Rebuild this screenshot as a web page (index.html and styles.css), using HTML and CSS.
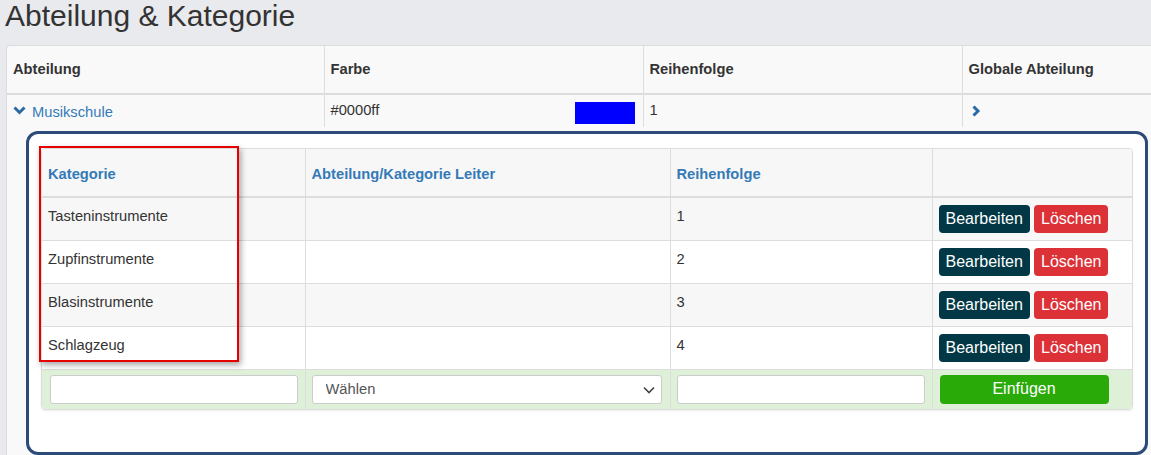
FILE: index.html
```html
<!DOCTYPE html>
<html lang="de">
<head>
  <meta charset="UTF-8">
  <meta name="viewport" content="width=device-width, initial-scale=1.0">
  <title>Abteilung &amp; Kategorie</title>
  <link rel="stylesheet" href="styles.css">
</head>
<body>

  <h1>Abteilung &amp; Kategorie</h1>

  <div class="dept-wrap">
    <table class="dept-table">
      <colgroup>
        <col style="width: 317px">
        <col style="width: 319px">
        <col style="width: 319px">
        <col>
      </colgroup>
      <thead>
        <tr>
          <th>Abteilung</th>
          <th>Farbe</th>
          <th>Reihenfolge</th>
          <th>Globale Abteilung</th>
        </tr>
      </thead>
      <tbody>
        <tr class="dept-row">
          <td>
            <a class="dept-link" href="#">
              <svg class="chev-down" width="13" height="9" viewBox="0 0 13 9"><polyline points="1.5,1.5 6.5,6.5 11.5,1.5" fill="none" stroke="#2a6aa5" stroke-width="3"/></svg>
              Musikschule
            </a>
          </td>
          <td>
            <div class="color-cell">
              <span>#0000ff</span>
              <span class="swatch"></span>
            </div>
          </td>
          <td>1</td>
          <td>
            <svg class="chev-right" width="9" height="12" viewBox="0 0 9 12"><polyline points="1.5,1.5 6,6 1.5,10.5" fill="none" stroke="#2a6aa5" stroke-width="3"/></svg>
          </td>
        </tr>
        <tr class="detail-row">
          <td colspan="4">
            <div class="detail-box">
              <div class="cat-wrap">
                <table class="cat-table">
                  <colgroup>
                    <col style="width: 263px">
                    <col style="width: 365px">
                    <col style="width: 262px">
                    <col>
                  </colgroup>
                  <thead>
                    <tr>
                      <th>Kategorie</th>
                      <th>Abteilung/Kategorie Leiter</th>
                      <th>Reihenfolge</th>
                      <th></th>
                    </tr>
                  </thead>
                  <tbody>
                    <tr>
                      <td>Tasteninstrumente</td>
                      <td></td>
                      <td>1</td>
                      <td><button class="btn btn-edit">Bearbeiten</button> <button class="btn btn-delete">Löschen</button></td>
                    </tr>
                    <tr>
                      <td>Zupfinstrumente</td>
                      <td></td>
                      <td>2</td>
                      <td><button class="btn btn-edit">Bearbeiten</button> <button class="btn btn-delete">Löschen</button></td>
                    </tr>
                    <tr>
                      <td>Blasinstrumente</td>
                      <td></td>
                      <td>3</td>
                      <td><button class="btn btn-edit">Bearbeiten</button> <button class="btn btn-delete">Löschen</button></td>
                    </tr>
                    <tr>
                      <td>Schlagzeug</td>
                      <td></td>
                      <td>4</td>
                      <td><button class="btn btn-edit">Bearbeiten</button> <button class="btn btn-delete">Löschen</button></td>
                    </tr>
                    <tr class="add-row">
                      <td><input type="text" class="field"></td>
                      <td>
                        <div class="select-wrap">
                          <select class="field select">
                            <option>Wählen</option>
                          </select>
                          <svg class="select-arrow" width="12" height="8" viewBox="0 0 12 8"><polyline points="1,1.5 6,6.5 11,1.5" fill="none" stroke="#444" stroke-width="1.6"/></svg>
                        </div>
                      </td>
                      <td><input type="text" class="field"></td>
                      <td><button class="btn btn-add">Einfügen</button></td>
                    </tr>
                  </tbody>
                </table>
              </div>
              <!-- highlight around the Kategorie column -->
              <div class="highlight"></div>
            </div>
          </td>
        </tr>
      </tbody>
    </table>
  </div>

</body>
</html>
```

FILE: styles.css
```css
* {
  margin: 0;
  padding: 0;
  box-sizing: border-box;
}

html, body {
  overflow: hidden;
}

body {
  font-family: 'Liberation Sans', Arial, sans-serif;
  font-size: 14.7px;
  line-height: 20px;
  color: #333;
  background-color: #e9eaee;
  height: 455px;
}

h1 {
  font-size: 30px;
  font-weight: normal;
  line-height: 32px;
  color: #333;
  padding-left: 5px;
  margin-bottom: 13px;
}

/* outer table */
.dept-wrap {
  margin-left: 6px;
  border: 1px solid #ddd;
  border-right: none;
  border-radius: 4px 0 0 0;
  background-color: #f9f9f9;
}

.dept-table {
  width: 100%;
  border-collapse: collapse;
  table-layout: fixed;
}

.dept-table th {
  text-align: left;
  font-weight: bold;
  padding: 13px 6px 14px;
  border-left: 1px solid #ddd;
  border-bottom: 2px solid #ddd;
}

.dept-table th:first-child,
.dept-row td:first-child {
  border-left: none;
}

.dept-row td {
  padding: 5px 6px 3px;
  border-left: 1px solid #ddd;
  vertical-align: top;
}

.dept-link {
  color: #337ab7;
  text-decoration: none;
  display: inline-flex;
  align-items: center;
  gap: 6px;
}

.chev-down {
  margin-top: -2px;
}

.chev-right {
  margin: 5px 0 0 3px;
  display: block;
}

.color-cell {
  display: flex;
  justify-content: space-between;
  align-items: flex-start;
  padding-right: 2px;
}

.swatch {
  width: 60px;
  height: 22px;
  margin-top: 2px;
  background-color: #0000ff;
}

.detail-row td {
  padding: 4px 0 0 19px;
}

/* category panel */
.detail-box {
  position: relative;
  width: 1122px;
  background-color: #fff;
  border: 3px solid #2c4b79;
  border-radius: 12px;
  padding: 14px 12px 42px;
}

.cat-wrap {
  border: 1px solid #ddd;
  border-radius: 4px;
  overflow: hidden;
  box-shadow: 0 1px 2px rgba(0, 0, 0, 0.08);
}

.cat-table {
  width: 100%;
  border-collapse: collapse;
  table-layout: fixed;
}

.cat-table th,
.cat-table td {
  border: 1px solid #ddd;
  text-align: left;
  vertical-align: top;
}

.cat-table tr th:first-child,
.cat-table tr td:first-child {
  border-left: none;
}

.cat-table tr th:last-child,
.cat-table tr td:last-child {
  border-right: none;
}

.cat-table th {
  border-top: none;
  border-bottom: 2px solid #ddd;
  background-color: #f7f7f7;
  color: #337ab7;
  font-weight: bold;
  padding: 15px 6px 12px;
}

.cat-table td {
  padding: 8px 6px 6px;
  height: 43px;
}

.cat-table tbody tr:nth-child(odd) td {
  background-color: #f7f7f7;
}

.cat-table tbody tr.add-row td {
  background-color: #dff0d8;
  padding: 5px 7px 5px 8px;
  border-bottom: none;
  height: auto;
}

.cat-table tbody tr.add-row td:nth-child(3) {
  padding-left: 6px;
}

.cat-table tbody tr.add-row td:nth-child(4) {
  padding-left: 7px;
}

.btn {
  display: inline-block;
  vertical-align: top;
  height: 28px;
  padding: 0 7px;
  border: none;
  border-radius: 4px;
  font-family: 'Liberation Sans', Arial, sans-serif;
  font-size: 16px;
  line-height: 28px;
  color: #fff;
  cursor: pointer;
  margin-top: -1px;
}

.btn-edit {
  background-color: #023845;
}

.btn-delete {
  background-color: #dc3237;
}

.btn-add {
  background-color: #29aa08;
  width: 169px;
  height: 29px;
  margin-top: 0;
}

.field {
  display: block;
  width: 100%;
  height: 29px;
  border: 1px solid #ccc;
  border-radius: 3px;
  background-color: #fff;
  font-family: 'Liberation Sans', Arial, sans-serif;
  font-size: 14.7px;
  color: #555;
}

.select-wrap {
  position: relative;
  margin-right: 1px;
  margin-left: -2px;
}

.select {
  appearance: none;
  padding-left: 13px;
}

.select-arrow {
  position: absolute;
  right: 7px;
  top: 11px;
  pointer-events: none;
}

.highlight {
  position: absolute;
  left: 10px;
  top: 12px;
  width: 200px;
  height: 216px;
  border: 2px solid #e50000;
  box-shadow: 2px 3px 6px rgba(0, 0, 0, 0.35);
  pointer-events: none;
}
```
